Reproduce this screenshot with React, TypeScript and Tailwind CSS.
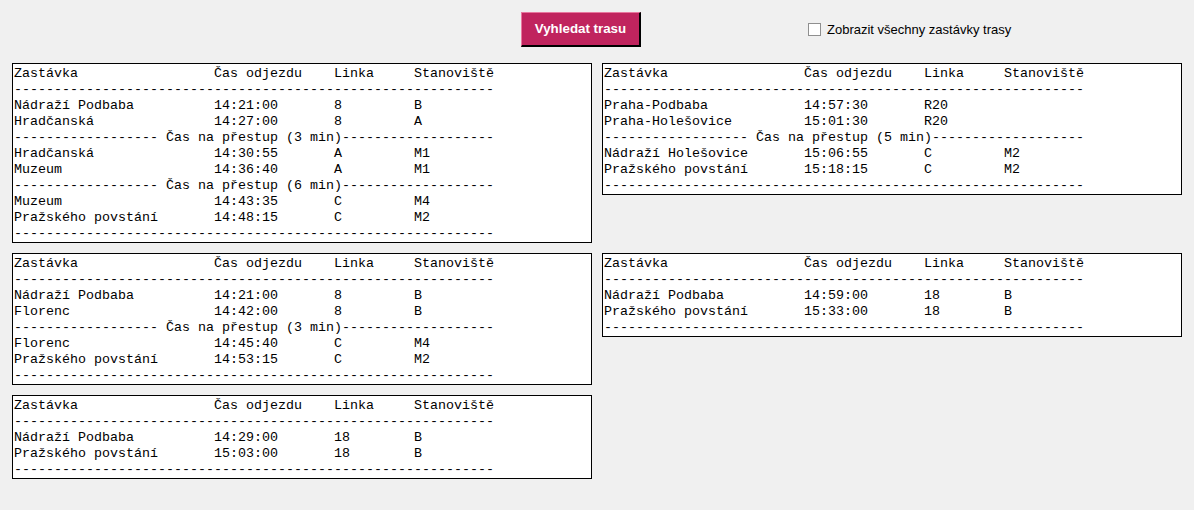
import React from "react";

type Row = { stop: string; time: string; line: string; stand: string };
type Leg = Row[];

const pad = (s: string, n: number) => s.padEnd(n, " ");
const dashes = "-".repeat(60);

const fmtRow = (r: Row) =>
  pad(r.stop, 25) + pad(r.time, 15) + pad(r.line, 10) + r.stand;

const header =
  pad("Zastávka", 25) + pad("Čas odjezdu", 15) + pad("Linka", 10) + "Stanoviště";

const transfer = (min: number) =>
  "-".repeat(18) + ` Čas na přestup (${min} min)` + "-".repeat(19);

const buildText = (legs: Leg[], transfers: number[]) => {
  const lines: string[] = [header, dashes];
  legs.forEach((leg, i) => {
    if (i > 0) lines.push(transfer(transfers[i - 1]));
    leg.forEach((r) => lines.push(fmtRow(r)));
  });
  lines.push(dashes);
  return lines.join("\n");
};

// order: row by row, left then right
const routes = [
  buildText(
    [
      [
        { stop: "Nádraží Podbaba", time: "14:21:00", line: "8", stand: "B" },
        { stop: "Hradčanská", time: "14:27:00", line: "8", stand: "A" },
      ],
      [
        { stop: "Hradčanská", time: "14:30:55", line: "A", stand: "M1" },
        { stop: "Muzeum", time: "14:36:40", line: "A", stand: "M1" },
      ],
      [
        { stop: "Muzeum", time: "14:43:35", line: "C", stand: "M4" },
        { stop: "Pražského povstání", time: "14:48:15", line: "C", stand: "M2" },
      ],
    ],
    [3, 6]
  ),
  buildText(
    [
      [
        { stop: "Praha-Podbaba", time: "14:57:30", line: "R20", stand: "" },
        { stop: "Praha-Holešovice", time: "15:01:30", line: "R20", stand: "" },
      ],
      [
        { stop: "Nádraží Holešovice", time: "15:06:55", line: "C", stand: "M2" },
        { stop: "Pražského povstání", time: "15:18:15", line: "C", stand: "M2" },
      ],
    ],
    [5]
  ),
  buildText(
    [
      [
        { stop: "Nádraží Podbaba", time: "14:21:00", line: "8", stand: "B" },
        { stop: "Florenc", time: "14:42:00", line: "8", stand: "B" },
      ],
      [
        { stop: "Florenc", time: "14:45:40", line: "C", stand: "M4" },
        { stop: "Pražského povstání", time: "14:53:15", line: "C", stand: "M2" },
      ],
    ],
    [3]
  ),
  buildText(
    [
      [
        { stop: "Nádraží Podbaba", time: "14:59:00", line: "18", stand: "B" },
        { stop: "Pražského povstání", time: "15:33:00", line: "18", stand: "B" },
      ],
    ],
    []
  ),
  buildText(
    [
      [
        { stop: "Nádraží Podbaba", time: "14:29:00", line: "18", stand: "B" },
        { stop: "Pražského povstání", time: "15:03:00", line: "18", stand: "B" },
      ],
    ],
    []
  ),
];

const RouteBox = ({ text }: { text: string }) => (
  <div className="border border-black bg-white px-[1px] pt-[2px] pb-0">
    <pre className="m-0 font-['Liberation_Mono','Courier_New',monospace] text-[13.33px] leading-[16px] text-black whitespace-pre">
      {text}
    </pre>
  </div>
);

const App = () => {
  return (
    <div className="w-full min-h-[510px] bg-[#f0f0f0] font-['Liberation_Sans',Arial,sans-serif]">
      <div className="flex items-center pt-[12px] pl-[521px] mb-[16px]">
        <button className="w-[120px] h-[35px] bg-[#c0245e] text-white text-[13.33px] font-bold border border-t-[#e8789f] border-l-[#e8789f] border-r-black border-b-black border-r-2 border-b-2">
          Vyhledat trasu
        </button>
        <label className="flex items-center ml-[167px] text-[13px] text-black">
          <span className="w-[13px] h-[13px] border border-[#8f8f8f] bg-white mr-[6px]" />
          Zobrazit všechny zastávky trasy
        </label>
      </div>
      <div className="grid grid-cols-[580px_580px] items-start gap-[10px] px-[12px]">
        {routes.map((t, i) => (
          <RouteBox key={i} text={t} />
        ))}
      </div>
    </div>
  );
};

export default App;
